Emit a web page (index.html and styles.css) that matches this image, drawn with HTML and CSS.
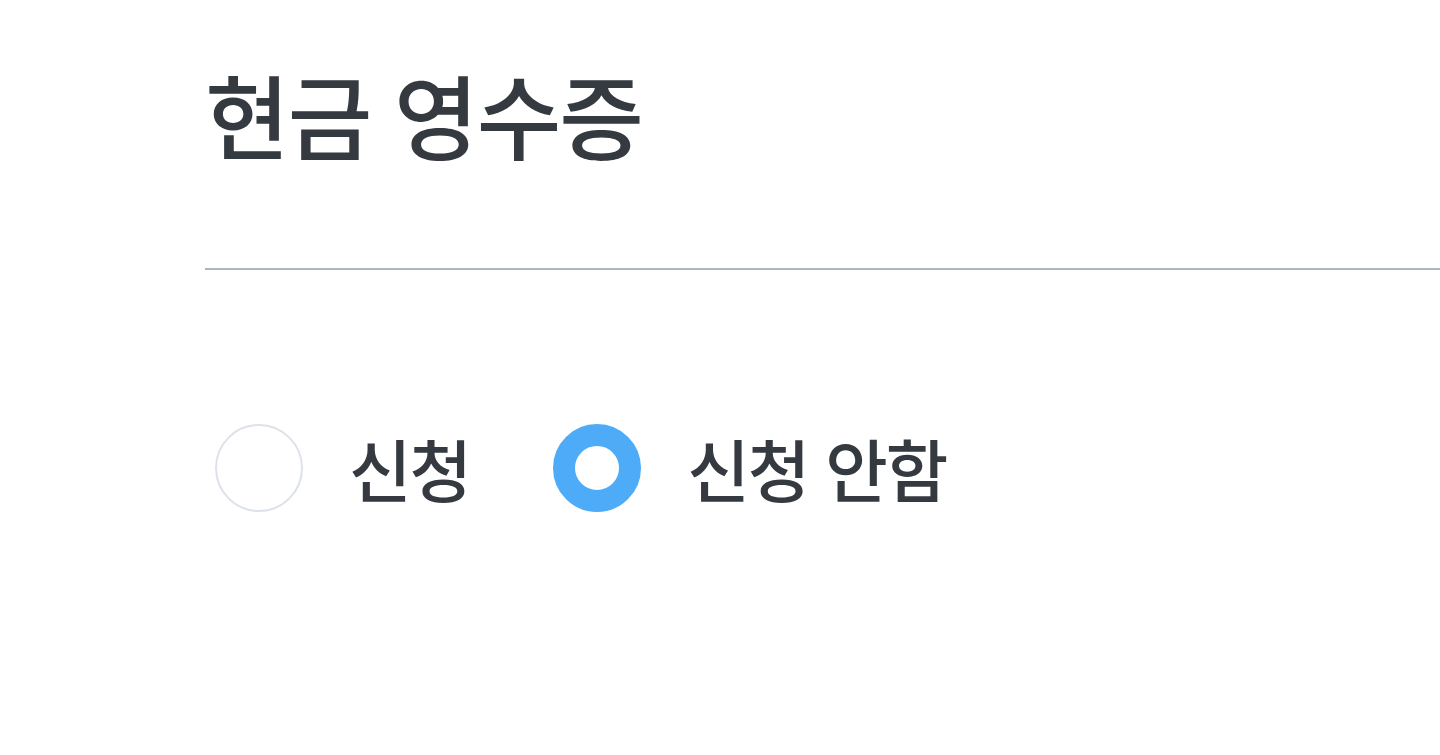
FILE: index.html
```html
<!DOCTYPE html>
<html lang="ko">
<head>
<meta charset="utf-8">
<title>현금 영수증</title>
<link rel="stylesheet" href="styles.css">
</head>
<body>
<section class="receipt">
  <h2 class="title">현금 영수증</h2>
  <div class="divider"></div>
  <div class="options">
    <label class="option">
      <span class="radio"></span>
      <span class="label">신청</span>
    </label>
    <label class="option">
      <span class="radio checked"></span>
      <span class="label">신청 안함</span>
    </label>
  </div>
</section>
</body>
</html>
```
FILE: styles.css
```css
html, body {
  margin: 0;
  padding: 0;
  background: #ffffff;
}
body {
  font-family: "Noto Sans CJK KR", "Noto Sans", sans-serif;
  color: #343a40;
  overflow: hidden;
}
.receipt {
  padding-left: 205px;
  padding-top: 48px;
}
.title {
  margin: 0;
  font-size: 92px;
  font-weight: 500;
  line-height: 130px;
  letter-spacing: -2px;
}
.divider {
  margin-top: 90px;
  height: 2px;
  background: #aeb5bd;
}
.options {
  display: flex;
  align-items: center;
  margin-top: 154px;
  margin-left: 10px;
}
.option {
  display: flex;
  align-items: center;
  margin-right: 83px;
}
.radio {
  box-sizing: border-box;
  width: 88px;
  height: 88px;
  border-radius: 50%;
  border: 2px solid #dde2ea;
  background: #fff;
}
.radio.checked {
  border: 22px solid #4dabf7;
}
.label {
  margin-left: 46px;
  font-size: 68px;
  font-weight: 500;
  letter-spacing: -2px;
  line-height: 1;
}
```
